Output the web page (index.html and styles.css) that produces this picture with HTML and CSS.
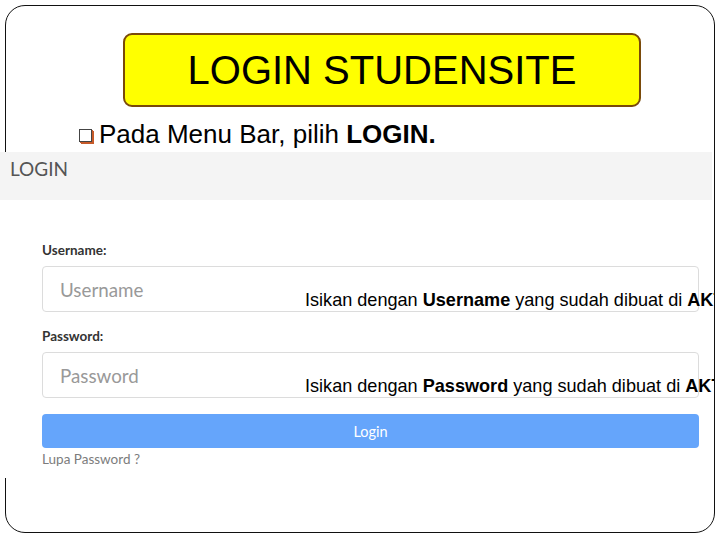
FILE: index.html
```html
<!DOCTYPE html>
<html>
<head>
<meta charset="utf-8">
<link rel="stylesheet" href="styles.css">
</head>
<body>
<div class="slide">
  <div class="title-box">LOGIN STUDENSITE</div>
  <p class="bullet-line"><span class="bullet"></span>Pada Menu Bar, pilih <b>LOGIN.</b></p>
  <div class="shot">
    <div class="shot-header">LOGIN</div>
    <div class="form">
      <div class="label">Username:</div>
      <div class="input">Username</div>
      <div class="label label-2">Password:</div>
      <div class="input">Password</div>
      <div class="btn">Login</div>
      <div class="forgot">Lupa Password ?</div>
    </div>
    <div class="note note-1">Isikan dengan <b>Username</b> yang sudah dibuat di <b>AKTIVASI</b></div>
    <div class="note note-2">Isikan dengan <b>Password</b> yang sudah dibuat di <b>AKTIVASI</b></div>
  </div>
</div>
</body>
</html>
```
FILE: styles.css
```css
html, body {
  margin: 0;
  padding: 0;
  background: #ffffff;
}
body {
  width: 720px;
  height: 540px;
  overflow: hidden;
}
.slide {
  box-sizing: border-box;
  margin: 5px 0 0 5px;
  width: 710px;
  height: 528px;
  border: 1px solid #111;
  border-radius: 20px;
  font-family: "Liberation Sans", Arial, sans-serif;
}
.title-box {
  box-sizing: border-box;
  margin: 27px 0 0 117px;
  width: 518px;
  height: 74px;
  background: #ffff00;
  border: 2px solid #7a4a0a;
  border-radius: 9px;
  display: flex;
  align-items: center;
  justify-content: center;
  font-size: 40px;
  color: #000;
}
.bullet-line {
  margin: 12px 0 0 73px;
  font-size: 26px;
  line-height: 30px;
  color: #000;
  white-space: nowrap;
}
.bullet-line b {
  font-weight: bold;
}
.bullet {
  display: inline-block;
  box-sizing: border-box;
  width: 13px;
  height: 13px;
  border: 1px solid #444;
  background: #fff;
  box-shadow: 2px 2px 0 #c65a2a, 1px 1px 0 #c65a2a;
  margin-right: 7px;
  vertical-align: 1px;
}
.shot {
  position: relative;
  margin: 3px 0 0 -6px;
  width: 712px;
  height: 326px;
  background: #fff;
  font-family: Lato, "Open Sans", sans-serif;
}
.shot-header {
  box-sizing: border-box;
  height: 48px;
  background: #f4f4f4;
  color: #555;
  font-size: 19px;
  line-height: 22px;
  padding: 6px 0 0 10px;
}
.form {
  padding: 41px 13px 0 42px;
}
.label {
  font-size: 13.5px;
  line-height: 18px;
  font-weight: bold;
  color: #333;
  margin-bottom: 7px;
}
.label-2 {
  margin-top: 15px;
}
.input {
  box-sizing: border-box;
  width: 657px;
  height: 46px;
  border: 1px solid #dcdcdc;
  border-radius: 4px;
  padding-left: 17px;
  display: flex;
  align-items: center;
  font-size: 18.8px;
  color: #999;
}
.btn {
  box-sizing: border-box;
  margin-top: 16px;
  width: 657px;
  height: 34px;
  border-radius: 4px;
  background: #65a5fb;
  color: #fff;
  font-size: 14.5px;
  display: flex;
  align-items: center;
  justify-content: center;
}
.forgot {
  margin-top: 2px;
  font-size: 13.5px;
  line-height: 18px;
  color: #7c7c7c;
}
.note {
  position: absolute;
  left: 305px;
  width: 409px;
  overflow: hidden;
  white-space: nowrap;
  font-family: "Liberation Sans", Arial, sans-serif;
  font-size: 18.1px;
  line-height: 21px;
  color: #000;
}
.note-1 {
  top: 138px;
}
.note-2 {
  top: 224px;
}
```
